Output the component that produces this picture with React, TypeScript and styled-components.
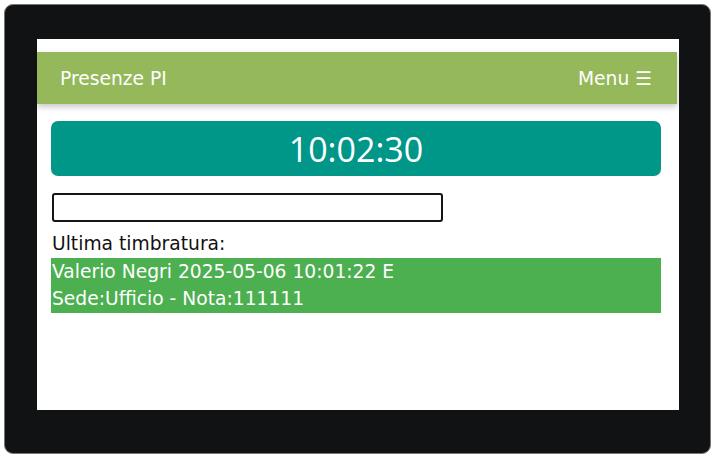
import React from "react"
import styled, { createGlobalStyle } from "styled-components"

const GlobalStyle = createGlobalStyle`
  html, body {
    background: #ffffff;
    margin: 0;
    padding: 0;
  }
`

const Device = styled.div`
  background: #111214;
  border: 1px solid #77777a;
  border-radius: 9px;
  box-sizing: border-box;
  height: 450px;
  margin: 4px 0 0 4px;
  padding: 34px 0 0 32px;
  width: 707px;
`

const Screen = styled.div`
  background: #ffffff;
  box-sizing: border-box;
  height: 371px;
  overflow: hidden;
  padding-top: 13px;
  width: 642px;
`

const Header = styled.header`
  align-items: center;
  background: #95b85a;
  box-shadow: 0 3px 6px rgba( 0, 0, 0, 0.22 );
  box-sizing: border-box;
  color: #ffffff;
  display: flex;
  font-family: "DejaVu Sans", Verdana, sans-serif;
  font-size: 18.7px;
  height: 52px;
  justify-content: space-between;
  padding: 0 25px 0 23px;
  width: 640px;
`

const Content = styled.main`
  display: flex;
  flex-direction: column;
  font-family: "DejaVu Sans", Verdana, sans-serif;
  font-size: 18.7px;
  padding: 17px 16px 0 14px;
  width: 610px;
`

const Clock = styled.div`
  align-items: center;
  background: #009688;
  border-radius: 7px;
  color: #ffffff;
  display: flex;
  font-family: "Open Sans", sans-serif;
  font-size: 34px;
  height: 55px;
  justify-content: center;
`

const BadgeInput = styled.input`
  border: 2px solid #151515;
  border-radius: 3px;
  box-sizing: border-box;
  height: 29px;
  margin: 17px 0 0 1px;
  width: 391px;
`

const Label = styled.div`
  color: #111111;
  line-height: 27.5px;
  margin-top: 8px;
  padding-left: 1px;
`

const LastStamp = styled.div`
  background: #4caf50;
  color: #ffffff;
  line-height: 27.5px;
  padding-left: 1px;
`

export default function App() {
  return (
    <>
      <GlobalStyle />
      <Device>
        <Screen>
          <Header>
            <span>Presenze PI</span>
            <span>Menu &#9776;</span>
          </Header>
          <Content>
            <Clock>10:02:30</Clock>
            <BadgeInput type="text" />
            <Label>Ultima timbratura:</Label>
            <LastStamp>
              Valerio Negri 2025-05-06 10:01:22 E<br />
              Sede:Ufficio - Nota:111111
            </LastStamp>
          </Content>
        </Screen>
      </Device>
    </>
  )
}
